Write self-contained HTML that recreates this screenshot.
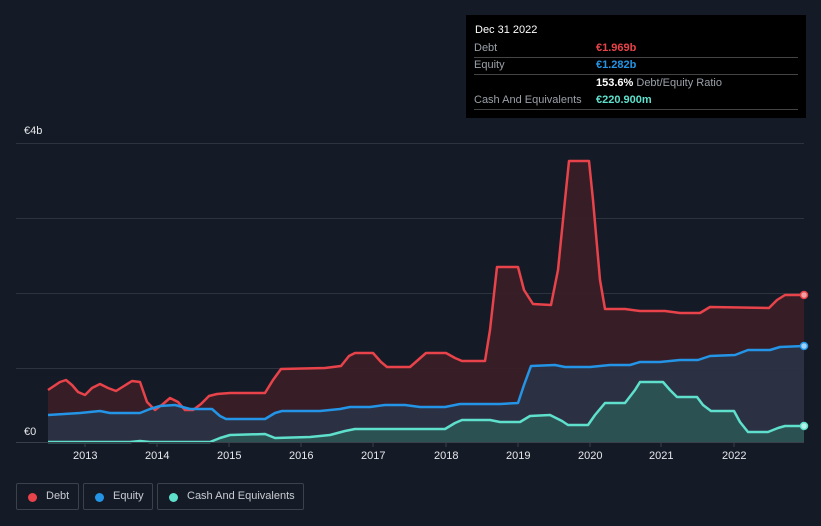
<!DOCTYPE html>
<html><head><meta charset="utf-8"><style>
html,body{margin:0;background:#151b26;width:821px;height:526px;overflow:hidden;font-family:"Liberation Sans",sans-serif;position:relative}
.tip{position:absolute;left:466px;top:15px;width:340px;height:103px;background:#000;color:#fff;font-size:11px}
.tip .r{position:absolute;left:8px;right:8px;border-bottom:1px solid #444;height:17px;line-height:17px}
.lab{color:#9aa0a8}
.val{position:absolute;left:122px;font-weight:bold}
.leg{position:absolute;top:483px;height:27px;border:1px solid #3c424c;border-radius:2px;color:#c8ccd2;font-size:11px;line-height:26px;box-sizing:border-box;white-space:nowrap}
.leg i{position:absolute;left:11px;top:9px;width:9px;height:9px;border-radius:50%}
.leg span{position:absolute;left:29px;top:-1px;white-space:nowrap}
.ax{position:absolute;color:#e6e8eb;font-size:11px}
</style></head><body>
<svg width="821" height="526" style="position:absolute;left:0;top:0">
<g stroke="#2e343e" stroke-width="1">
<line x1="16" y1="143.5" x2="804" y2="143.5"/><line x1="16" y1="218.5" x2="804" y2="218.5"/>
<line x1="16" y1="293.5" x2="804" y2="293.5"/><line x1="16" y1="368.5" x2="804" y2="368.5"/>
</g>
<polygon fill="#3b1e26" opacity="0.9" points="48,442 48,390 60,382 66,380 72,385 78,392 85,395 92,388 100,384 108,388 116,391 124,386 132,381 140,382 147,402 155,410 163,404 170,398 178,402 185,410 193,410 201,404 209,396 217,394 230,393 265,393 273,380 281,369 325,368 341,366 349,356 355,353 373,353 381,362 387,367 410,367 418,360 426,353 446,353 455,358 462,361 485,361 490,330 497,267 518,267 524,290 533,304 551,305 558,270 565,200 569,161 589,161 593,200 600,280 605,309 625,309 640,311 665,311 680,313 700,313 710,307 769,308 777,300 785,295 804,295 804,442"/>
<polygon fill="#2b3347" opacity="0.9" points="48,442 48,415 80,413 100,411 110,413 140,413 150,409 160,406 175,405 190,409 212,409 220,416 226,419 265,419 275,413 282,411 320,411 340,409 350,407 370,407 385,405 405,405 420,407 445,407 460,404 500,404 518,403 524,385 531,366 555,365 565,367 590,367 610,365 630,365 640,362 660,362 680,360 698,360 710,356 735,355 748,350 770,350 780,347 804,346 804,442"/>
<polygon fill="#2d5a58" opacity="0.8" points="48,442 130,442 140,441 150,442 210,442 220,438 230,435 265,434 275,438 310,437 330,435 345,431 355,429 445,429 455,423 462,420 490,420 500,422 520,422 530,416 550,415 562,421 568,425 588,425 595,415 605,403 625,403 635,390 640,382 663,382 670,390 677,397 697,397 703,405 711,411 734,411 740,422 748,432 768,432 778,428 785,426 804,426 804,442"/>
<g fill="none" stroke-width="2.5" stroke-linejoin="round">
<polyline stroke="#e8434a" points="48,390 60,382 66,380 72,385 78,392 85,395 92,388 100,384 108,388 116,391 124,386 132,381 140,382 147,402 155,410 163,404 170,398 178,402 185,410 193,410 201,404 209,396 217,394 230,393 265,393 273,380 281,369 325,368 341,366 349,356 355,353 373,353 381,362 387,367 410,367 418,360 426,353 446,353 455,358 462,361 485,361 490,330 497,267 518,267 524,290 533,304 551,305 558,270 565,200 569,161 589,161 593,200 600,280 605,309 625,309 640,311 665,311 680,313 700,313 710,307 769,308 777,300 785,295 804,295"/>
<polyline stroke="#2394e6" points="48,415 80,413 100,411 110,413 140,413 150,409 160,406 175,405 190,409 212,409 220,416 226,419 265,419 275,413 282,411 320,411 340,409 350,407 370,407 385,405 405,405 420,407 445,407 460,404 500,404 518,403 524,385 531,366 555,365 565,367 590,367 610,365 630,365 640,362 660,362 680,360 698,360 710,356 735,355 748,350 770,350 780,347 804,346"/>
<polyline stroke="#5ee0cc" points="48,442 130,442 140,441 150,442 210,442 220,438 230,435 265,434 275,438 310,437 330,435 345,431 355,429 445,429 455,423 462,420 490,420 500,422 520,422 530,416 550,415 562,421 568,425 588,425 595,415 605,403 625,403 635,390 640,382 663,382 670,390 677,397 697,397 703,405 711,411 734,411 740,422 748,432 768,432 778,428 785,426 804,426"/>
</g>
<line x1="16" y1="442.5" x2="804" y2="442.5" stroke="#3a404a"/>
<g stroke="#3a404a"><line x1="85" y1="443" x2="85" y2="447"/><line x1="157" y1="443" x2="157" y2="447"/><line x1="229" y1="443" x2="229" y2="447"/><line x1="301" y1="443" x2="301" y2="447"/><line x1="373" y1="443" x2="373" y2="447"/><line x1="446" y1="443" x2="446" y2="447"/><line x1="518" y1="443" x2="518" y2="447"/><line x1="590" y1="443" x2="590" y2="447"/><line x1="661" y1="443" x2="661" y2="447"/><line x1="734" y1="443" x2="734" y2="447"/></g>
<circle cx="804" cy="295" r="3.5" fill="#f0a0a0" stroke="#e8434a" stroke-width="1.5"/>
<circle cx="804" cy="346" r="3.5" fill="#9fd0f5" stroke="#2394e6" stroke-width="1.5"/>
<circle cx="804" cy="426" r="3.5" fill="#b5f3ea" stroke="#5ee0cc" stroke-width="1.5"/>
</svg>
<div class="ax" style="left:24px;top:125px">€4b</div>
<div class="ax" style="left:24px;top:426px">€0</div>
<div class="ax" style="left:73px;top:450px">2013</div><div class="ax" style="left:145px;top:450px">2014</div><div class="ax" style="left:217px;top:450px">2015</div><div class="ax" style="left:289px;top:450px">2016</div><div class="ax" style="left:361px;top:450px">2017</div><div class="ax" style="left:434px;top:450px">2018</div><div class="ax" style="left:506px;top:450px">2019</div><div class="ax" style="left:578px;top:450px">2020</div><div class="ax" style="left:649px;top:450px">2021</div><div class="ax" style="left:722px;top:450px">2022</div>
<div class="tip">
<div style="position:absolute;left:9px;top:9px;font-size:11px">Dec 31 2022</div>
<div class="r" style="top:25px"><span class="lab">Debt</span><span class="val" style="color:#e8434a">€1.969b</span></div>
<div class="r" style="top:42px"><span class="lab">Equity</span><span class="val" style="color:#2394e6">€1.282b</span></div>
<div style="position:absolute;left:130px;top:60px;line-height:17px"><b>153.6%</b> <span class="lab">Debt/Equity Ratio</span></div>
<div class="r" style="top:77px"><span class="lab">Cash And Equivalents</span><span class="val" style="color:#5ee0cc">€220.900m</span></div>
</div>
<div class="leg" style="left:16px;width:63px"><i style="background:#e8434a"></i><span>Debt</span></div>
<div class="leg" style="left:83px;width:70px"><i style="background:#2394e6"></i><span>Equity</span></div>
<div class="leg" style="left:157px;width:147px"><i style="background:#5ee0cc"></i><span>Cash And Equivalents</span></div>
</body></html>
